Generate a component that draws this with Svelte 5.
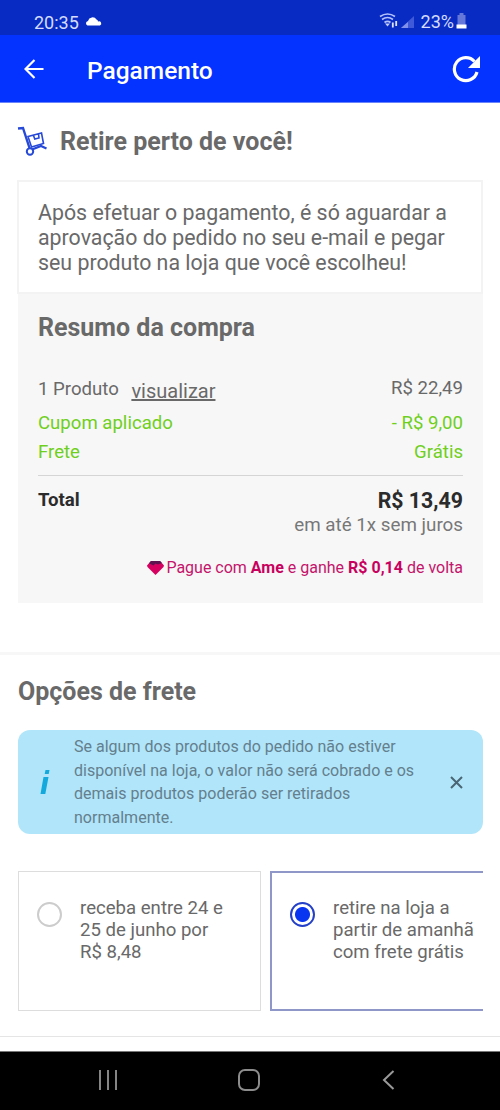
<script>
  let alertaVisivel = $state(true);
  let freteSelecionado = $state('loja');

  const opcoesFrete = [
    { id: 'casa', linhas: ['receba entre 24 e', '25 de junho por', 'R$ 8,48'] },
    { id: 'loja', linhas: ['retire na loja a', 'partir de amanhã', 'com frete grátis'] }
  ];
</script>

<div class="screen">
  <div class="status-bar">
    <span class="clock">20:35</span>
    <svg class="cloud" width="17" height="11" viewBox="0 0 17 11">
      <path d="M2.500 9.500a2.400 2.400 0 0 1 .5-4.600A4.700 4.700 0 0 1 11.500 3.500a2 2 0 0 1 1.500 2 2.200 2.200 0 0 1 2 4z" fill="#fff" />
    </svg>
    <div class="status-right">
      <svg width="20" height="18" viewBox="0 0 20 18" fill="none" stroke="#b3c0fa" stroke-width="1.700">
        <path d="M1 4.500q7.500-5 15 0M3 7.500q5.500-4 11 0M5.500 10.500q3-2.300 6 0" />
        <path d="M6 11.500h5L8.500 14.500z" fill="#c3cdfb" stroke="none" />
        <path d="M13.800 10.500v5M17.200 9v5" stroke="#dfe5ff" stroke-width="1.800" />
      </svg>
      <svg class="signal" width="14" height="14" viewBox="0 0 14 14">
        <path d="M0 13L13 1v12z" fill="#3f59d8" />
        <path d="M0 13l7-6v6z" fill="#8292ea" />
      </svg>
      <span class="battery-text">23%</span>
      <svg width="11" height="16" viewBox="0 0 11 16">
        <path d="M3.500 0h4v2h2v10h-8V2h2z" fill="#6577d8" />
        <path d="M.5 11.500h10v4H.5z" fill="#fff" />
      </svg>
    </div>
  </div>

  <header class="app-bar">
    <button class="icon-btn" aria-label="Voltar">
      <svg width="20" height="20" viewBox="0 0 20 20" fill="none" stroke="#fff" stroke-width="2.200">
        <path d="M19.500 10H1.500M10.500 1L1.500 10l9 9" />
      </svg>
    </button>
    <h1>Pagamento</h1>
    <button class="icon-btn" aria-label="Atualizar">
      <svg width="29" height="28" viewBox="0 0 29 28">
        <path d="M25 17A11.500 11.500 0 1 1 22.500 6.500" fill="none" stroke="#fff" stroke-width="3.200" />
        <path d="M28 1v12H16z" fill="#fff" />
      </svg>
    </button>
  </header>

  <main>
    <h2 class="pickup-title">
      <svg width="31" height="31" viewBox="0 0 31 31" fill="none" stroke="#2649d8" stroke-width="1.600">
        <path d="M1 2.500l5-.5 6.500 20" stroke-width="2.400" />
        <path d="M11 10.500l13.500-3.500 2 10.500-12 3.500zM16.500 9.500l1.300 3.500 4.200-1-.5-4" />
        <path d="M15 23.500l9-3.500 5.500 2.500" stroke-width="2.300" />
        <circle cx="13" cy="25.500" r="3.200" stroke-width="2" />
      </svg>
      <span>Retire perto de você!</span>
    </h2>

    <p class="pickup-card">
      Após efetuar o pagamento, é só aguardar a<br />
      aprovação do pedido no seu e-mail e pegar<br />
      seu produto na loja que você escolheu!
    </p>

    <section class="summary">
      <h2>Resumo da compra</h2>
      <div class="row products">
        <span>1 Produto <a href="#produtos">visualizar</a></span>
        <span>R$ 22,49</span>
      </div>
      <div class="row discount"><span>Cupom aplicado</span><span>- R$ 9,00</span></div>
      <div class="row discount"><span>Frete</span><span>Grátis</span></div>
      <div class="row total">
        <strong>Total</strong>
        <div class="total-value">
          <strong>R$ 13,49</strong>
          <span>em até 1x sem juros</span>
        </div>
      </div>
      <p class="cashback">
        <svg width="17" height="14" viewBox="0 0 17 14">
          <path d="M4 0h9l4 4.500-.5 1.500L8.500 14 .5 6 0 4.500z" fill="#d5005f" />
          <path d="M4 0h9l2 2-4 1.500-2.500-1-2 2L2 2.300z" fill="#5b1450" />
        </svg>
        <span>Pague com <b>Ame</b> e ganhe <b>R$ 0,14</b> de volta</span>
      </p>
    </section>
  </main>

  <section class="shipping">
    <h2>Opções de frete</h2>
    {#if alertaVisivel}
      <div class="alert">
        <svg class="info" width="12" height="26" viewBox="0 0 12 26" fill="#13a9dc">
          <path d="M6.500 1h4l-.8 4h-4zM4.500 8h5L6.300 25H1.500z" />
        </svg>
        <p>
          Se algum dos produtos do pedido não estiver<br />
          disponível na loja, o valor não será cobrado e os<br />
          demais produtos poderão ser retirados<br />
          normalmente.
        </p>
        <button class="icon-btn" aria-label="Fechar" onclick={() => (alertaVisivel = false)}>
          <svg width="13" height="13" viewBox="0 0 13 13" stroke="#4a6573" stroke-width="2">
            <path d="M1 1l11 11M12 1L1 12" />
          </svg>
        </button>
      </div>
    {/if}

    <div class="options">
      {#each opcoesFrete as opcao}
        <button
          class="option"
          class:selected={freteSelecionado === opcao.id}
          onclick={() => (freteSelecionado = opcao.id)}
        >
          <span class="radio"></span>
          <span class="option-text">
            {#each opcao.linhas as linha}
              <span>{linha}</span>
            {/each}
          </span>
        </button>
      {/each}
    </div>
  </section>

  <nav class="system-nav">
    <svg width="20" height="20" viewBox="0 0 20 20" stroke="#858585" stroke-width="2">
      <path d="M2 0v20M10 0v20M18 0v20" />
    </svg>
    <svg width="24" height="22" viewBox="0 0 24 22" fill="none" stroke="#8c8c8c" stroke-width="2">
      <rect x="2" y="1" width="20" height="20" rx="6" />
    </svg>
    <svg width="13" height="20" viewBox="0 0 13 20" fill="none" stroke="#9a9a9a" stroke-width="2">
      <path d="M11.500 1L2 10l9.500 9" />
    </svg>
  </nav>
</div>

<style>
  :global(body) {
    margin: 0;
    background: #fff;
  }

  .screen {
    width: 500px;
    height: 1110px;
    display: flex;
    flex-direction: column;
    overflow: hidden;
    font-family: Roboto, "Liberation Sans", sans-serif;
    color: #696969;
  }

  h1,
  h2,
  p {
    margin: 0;
  }

  svg {
    display: block;
    flex: none;
  }

  button {
    padding: 0;
    border: none;
    background: none;
    font: inherit;
    color: inherit;
    text-align: left;
    cursor: pointer;
  }

  .status-bar {
    height: 35px;
    flex: none;
    box-sizing: border-box;
    padding: 9px 33px 0 34px;
    display: flex;
    align-items: center;
    background: #082bc4;
    color: #d5dcff;
    font-size: 18px;
  }

  .cloud {
    margin: -2px 0 0 6px;
  }

  .status-right {
    display: flex;
    align-items: center;
    margin: -2px 0 0 auto;
  }

  .signal {
    margin: 2px 6px 0 2px;
  }

  .battery-text {
    margin-right: 2px;
  }

  .app-bar {
    height: 68px;
    flex: none;
    box-sizing: border-box;
    padding: 1px 19px 0 24px;
    display: flex;
    align-items: center;
    background: #0432ff;
    border-bottom: 1px solid #6a85fb;
  }

  .app-bar h1 {
    flex: 1;
    margin: 2px 0 0 43px;
    color: #fff;
    font-size: 24.500px;
    font-weight: 500;
  }

  main {
    flex: none;
    height: 552px;
    box-sizing: border-box;
    padding: 0 17px;
    border-bottom: 3px solid #f7f7f7;
  }

  h2 {
    font-size: 25px;
    font-weight: 700;
    line-height: 30px;
  }

  .pickup-title {
    display: flex;
    align-items: center;
    gap: 12px;
    height: 77px;
  }

  .pickup-card {
    height: 114px;
    box-sizing: border-box;
    padding: 18px 18px 0 19px;
    border: 2px solid #f3f3f3;
    font-size: 21.350px;
    line-height: 25px;
    white-space: nowrap;
  }

  .summary {
    height: 309px;
    box-sizing: border-box;
    margin: 0 0 0 1px;
    padding: 19px 20px 0;
    background: #f7f7f7;
  }

  .row {
    display: flex;
    justify-content: space-between;
    font-size: 18.600px;
  }

  .products {
    margin-top: 31px;
    height: 35px;
    line-height: 29px;
  }

  .products a {
    position: relative;
    top: 3px;
    margin-left: 8px;
    color: inherit;
    font-size: 20px;
  }

  .discount {
    height: 29px;
    line-height: 29px;
    color: #6fcf1d;
  }

  .total {
    margin-top: 8px;
    border-top: 1px solid #d5d5d5;
    padding-top: 10px;
    line-height: 28px;
    color: #2b2b2b;
  }

  .total-value {
    display: flex;
    flex-direction: column;
    align-items: flex-end;
  }

  .total-value strong {
    font-size: 21.300px;
    line-height: 30px;
  }

  .total-value span {
    font-size: 18.800px;
    line-height: 19px;
    color: #777;
  }

  .cashback {
    display: flex;
    align-items: center;
    justify-content: flex-end;
    gap: 2px;
    margin-top: 21px;
    color: #c4146b;
    font-size: 16px;
    line-height: 24px;
  }

  .cashback b {
    color: #c8005e;
  }

  .shipping {
    flex: none;
    height: 382px;
    box-sizing: border-box;
    padding: 22px 17px 0 18px;
    border-bottom: 1px solid #e5e5e5;
  }

  .alert {
    height: 104px;
    box-sizing: border-box;
    margin-top: 23px;
    padding: 0 20px 0 21px;
    display: flex;
    align-items: center;
    border-radius: 12px;
    background: #b1e5fa;
  }

  .alert p {
    flex: 1;
    margin-left: 23px;
    font-size: 16.050px;
    line-height: 23.500px;
    color: #647f8d;
    white-space: nowrap;
  }

  .options {
    display: flex;
    gap: 9px;
    margin-top: 37px;
    overflow: hidden;
  }

  .option {
    flex: none;
    width: 243px;
    height: 140px;
    box-sizing: border-box;
    padding: 25px 0 0 18px;
    display: flex;
    align-items: flex-start;
    border: 1px solid #ddd;
  }

  .option.selected {
    border: 2px solid #8f97c8;
    padding: 24px 0 0 18px;
  }

  .radio {
    flex: none;
    width: 25px;
    height: 25px;
    margin-top: 5px;
    box-sizing: border-box;
    border: 2px solid #ccc;
    border-radius: 50%;
  }

  .selected .radio {
    border-color: #2440c8;
    background: radial-gradient(circle, #0a35f0 7px, #fff 8px);
  }

  .option-text {
    display: flex;
    flex-direction: column;
    margin-left: 18px;
    font-size: 18.600px;
    line-height: 22px;
    white-space: nowrap;
  }

  .system-nav {
    flex: none;
    height: 59px;
    box-sizing: border-box;
    margin-top: auto;
    padding: 0 105px 2px 98px;
    display: flex;
    align-items: center;
    justify-content: space-between;
    border-top: 1px solid #777;
    background: #000;
  }

  .system-nav svg:nth-child(2) {
    margin-right: 3px;
  }
</style>
